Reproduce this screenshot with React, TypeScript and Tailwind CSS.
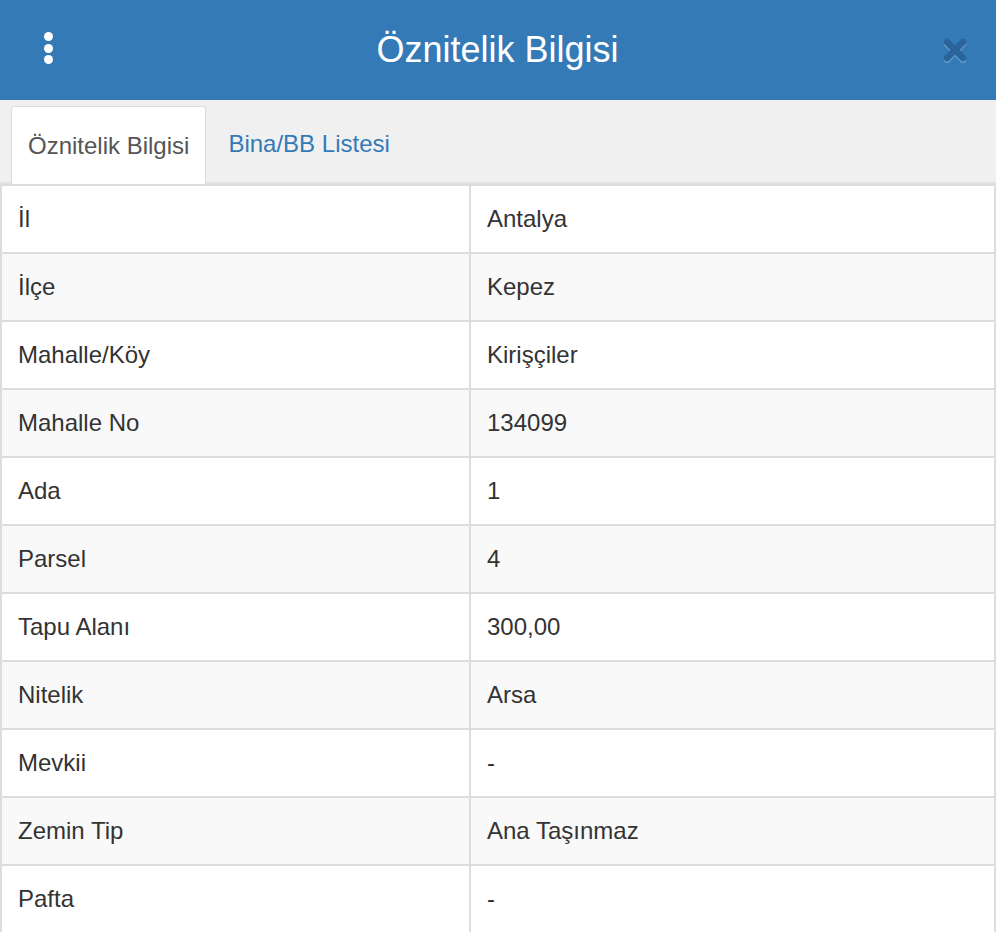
import React from "react";

const rows = [
  { label: "İl", value: "Antalya" },
  { label: "İlçe", value: "Kepez" },
  { label: "Mahalle/Köy", value: "Kirişçiler" },
  { label: "Mahalle No", value: "134099" },
  { label: "Ada", value: "1" },
  { label: "Parsel", value: "4" },
  { label: "Tapu Alanı", value: "300,00" },
  { label: "Nitelik", value: "Arsa" },
  { label: "Mevkii", value: "-" },
  { label: "Zemin Tip", value: "Ana Taşınmaz" },
  { label: "Pafta", value: "-" },
];

export default function App() {
  return (
    <div className="min-h-screen bg-white font-['Liberation_Sans',Arial,sans-serif] text-[#333]">
      {/* Header */}
      <header className="flex h-[100px] items-center justify-between bg-[#337ab7] pl-[28px] pr-[22px]">
        <button className="-mt-[4px] flex w-[40px] flex-col items-center gap-[2.5px]">
          <span className="size-[9px] rounded-full bg-white" />
          <span className="size-[9px] rounded-full bg-white" />
          <span className="size-[9px] rounded-full bg-white" />
        </button>
        <h1 className="text-[36px] leading-none text-white">Öznitelik Bilgisi</h1>
        <button className="flex w-[47px] justify-end pr-[6px]">
          <svg width="26" height="26" viewBox="0 0 26 26">
            <g strokeWidth="6.5" strokeLinecap="round">
              <path d="M5 6 L21 22 M21 6 L5 22" stroke="rgba(255,255,255,0.22)" transform="translate(0 1)" />
              <path d="M5 5 L21 21 M21 5 L5 21" stroke="#2a649a" />
            </g>
          </svg>
        </button>
      </header>

      {/* Tabs */}
      <nav className="flex h-[84px] items-end border-b-2 border-[#e2e2e2] bg-[#f0f0f0] pl-[11px]">
        <div className="-mb-[2px] flex h-[78px] items-center rounded-t-[3px] border border-b-0 border-[#ddd] bg-white px-[16px] text-[24px] text-[#555]">
          Öznitelik Bilgisi
        </div>
        <div className="ml-[4px] flex h-[76px] items-center px-[18px] text-[24px] text-[#337ab7]">
          Bina/BB Listesi
        </div>
      </nav>

      {/* Attribute table */}
      <div className="border-x-2 border-t-2 border-[#ddd]">
        {rows.map((r, i) => (
          <div
            key={r.label}
            className={`flex h-[68px] border-b-2 border-[#ddd] text-[24px] ${i % 2 === 1 ? "bg-[#f9f9f9]" : "bg-white"}`}
          >
            <div className="flex w-[469px] items-center border-r-2 border-[#ddd] pl-[16px]">{r.label}</div>
            <div className="flex flex-1 items-center pl-[16px]">{r.value}</div>
          </div>
        ))}
      </div>
    </div>
  );
}
